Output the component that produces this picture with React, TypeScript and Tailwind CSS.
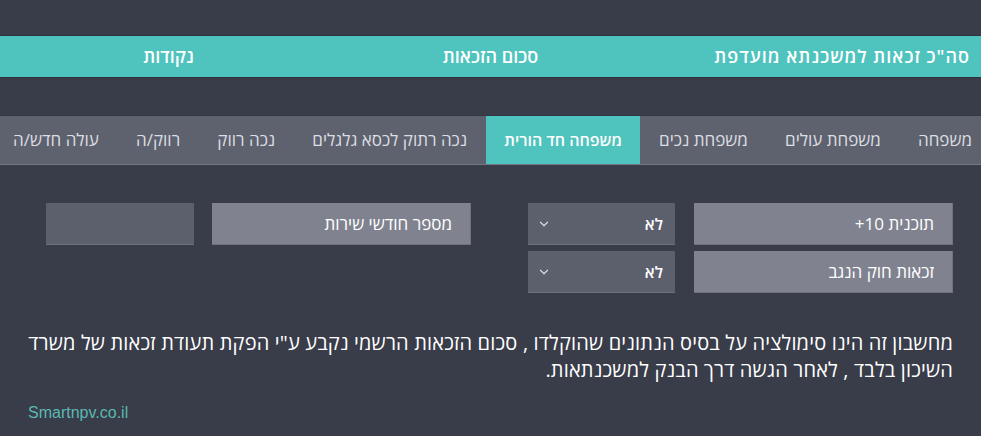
import { ChevronDown } from "lucide-react";

const tabs = [
  "משפחה",
  "משפחת עולים",
  "משפחת נכים",
  "משפחה חד הורית",
  "נכה רתוק לכסא גלגלים",
  "נכה רווק",
  "רווק/ה",
  "עולה חדש/ה",
];

const activeTab = "משפחה חד הורית";

function SelectBox({ value }: { value: string }) {
  return (
    <div className="flex-1 h-[42px] bg-[#5c606c] border-b border-[#6c707c] flex items-center justify-between pr-[12px] pl-[9px]">
      <span className="text-white font-semibold text-[16px]">{value}</span>
      <ChevronDown className="h-[14px] w-[14px] text-[#d6d8de]" strokeWidth={2.25} />
    </div>
  );
}

function LabelBox({ text }: { text: string }) {
  return (
    <div className="w-[259px] h-[42px] bg-[#80838f] border-r border-b border-[#6f727e] flex items-center pr-[18px] text-white text-[17px] font-medium">
      {text}
    </div>
  );
}

export default function App() {
  return (
    <div
      dir="rtl"
      className="w-[981px] h-[436px] bg-[#393c49] overflow-hidden pt-[35px]"
      style={{ fontFamily: '"Open Sans", "DejaVu Sans", sans-serif' }}
    >
      {/* summary bar */}
      <div className="grid grid-cols-3 h-[43px] bg-[#4fc3bd] border-y border-[#2f323d] text-white font-semibold text-[18px] items-center">
        <div className="pr-[11px] text-right tracking-[1px]">סה"כ זכאות למשכנתא מועדפת</div>
        <div className="text-center">סכום הזכאות</div>
        <div className="text-center pl-[10px]">נקודות</div>
      </div>

      {/* tabs */}
      <div className="mt-[37px] bg-[#5e626e] border-t border-[#343743] border-b border-b-[#737784] overflow-hidden">
        <div className="flex justify-between h-[48px] -mr-[9px] -ml-[5px]">
          {tabs.map((t) => (
            <div
              key={t}
              className={
                t === activeTab
                  ? "px-[18px] flex items-center bg-[#4fc3bd] text-white font-semibold text-[16px] whitespace-nowrap"
                  : "px-[18px] flex items-center text-[#dcdee3] text-[17px] whitespace-nowrap"
              }
            >
              {t}
            </div>
          ))}
        </div>
      </div>

      {/* form */}
      <div className="mt-[38px] pr-[28px] flex gap-[57px]">
        <div className="w-[425px] flex flex-col gap-[6px]">
          <div className="flex gap-[19px]">
            <LabelBox text="תוכנית 10+" />
            <SelectBox value="לא" />
          </div>
          <div className="flex gap-[19px]">
            <LabelBox text="זכאות חוק הנגב" />
            <SelectBox value="לא" />
          </div>
        </div>
        <div className="w-[425px] flex gap-[18px] items-start">
          <LabelBox text="מספר חודשי שירות" />
          <div className="flex-1 h-[42px] bg-[#5c606c] border-b border-[#6c707c]" />
        </div>
      </div>

      {/* note */}
      <p className="mt-[36px] px-[28px] text-white text-[20px] font-medium leading-[27px] tracking-[0.17px] whitespace-nowrap">
        מחשבון זה הינו סימולציה על בסיס הנתונים שהוקלדו , סכום הזכאות הרשמי נקבע ע"י הפקת תעודת זכאות של משרד
        <br />
        השיכון בלבד , לאחר הגשה דרך הבנק למשכנתאות.
      </p>

      <div dir="ltr" className="mt-[18px] pl-[28px] text-[16px] text-[#59b9b1]" style={{ fontFamily: '"Liberation Sans", Arial, sans-serif' }}>
        Smartnpv.co.il
      </div>
    </div>
  );
}
